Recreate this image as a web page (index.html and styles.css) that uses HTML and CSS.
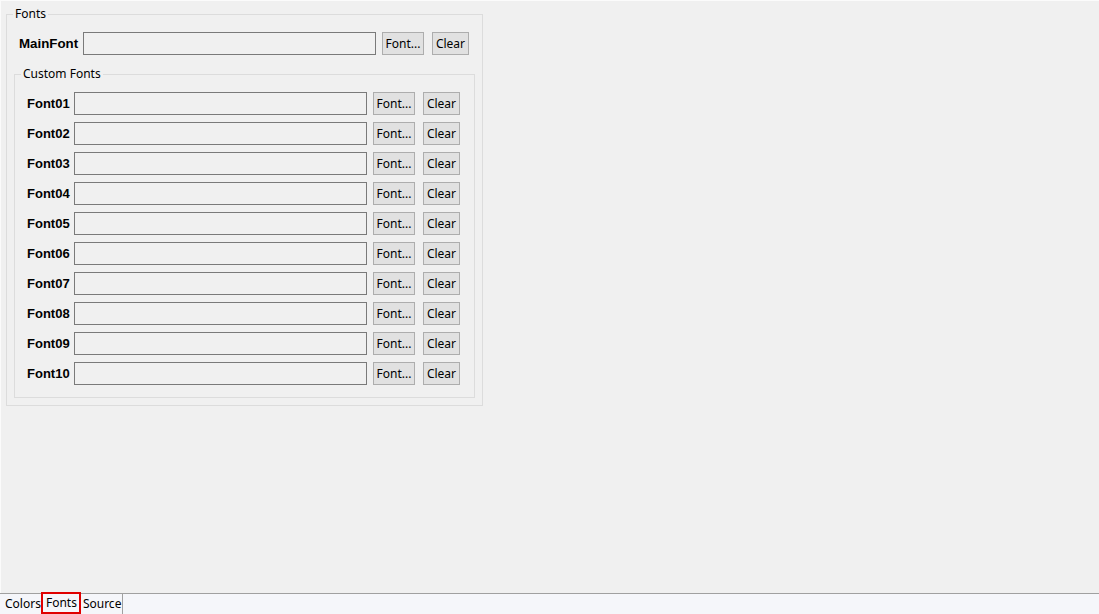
FILE: index.html
```html
<html lang="en">
  <head>
    <meta charset="UTF-8" />
    <meta name="viewport" content="width=device-width, initial-scale=1.0" />
    <title>Fonts</title>
    <link rel="stylesheet" href="styles.css">
  </head>
  <body>
    <div class="window">
      <div class="page">
        <fieldset class="group outer">
          <legend>Fonts</legend>
          <div class="group-body outer-body">
            <div class="font-row main-row">
              <label class="font-label">MainFont</label>
              <input class="font-field" type="text" readonly />
              <button class="btn btn-font">Font...</button>
              <button class="btn btn-clear">Clear</button>
            </div>

            <fieldset class="group inner">
              <legend>Custom Fonts</legend>
              <div class="group-body inner-body">
                <div class="font-row">
                  <label class="font-label">Font01</label>
                  <input class="font-field" type="text" readonly />
                  <button class="btn btn-font">Font...</button>
                  <button class="btn btn-clear">Clear</button>
                </div>
                <div class="font-row">
                  <label class="font-label">Font02</label>
                  <input class="font-field" type="text" readonly />
                  <button class="btn btn-font">Font...</button>
                  <button class="btn btn-clear">Clear</button>
                </div>
                <div class="font-row">
                  <label class="font-label">Font03</label>
                  <input class="font-field" type="text" readonly />
                  <button class="btn btn-font">Font...</button>
                  <button class="btn btn-clear">Clear</button>
                </div>
                <div class="font-row">
                  <label class="font-label">Font04</label>
                  <input class="font-field" type="text" readonly />
                  <button class="btn btn-font">Font...</button>
                  <button class="btn btn-clear">Clear</button>
                </div>
                <div class="font-row">
                  <label class="font-label">Font05</label>
                  <input class="font-field" type="text" readonly />
                  <button class="btn btn-font">Font...</button>
                  <button class="btn btn-clear">Clear</button>
                </div>
                <div class="font-row">
                  <label class="font-label">Font06</label>
                  <input class="font-field" type="text" readonly />
                  <button class="btn btn-font">Font...</button>
                  <button class="btn btn-clear">Clear</button>
                </div>
                <div class="font-row">
                  <label class="font-label">Font07</label>
                  <input class="font-field" type="text" readonly />
                  <button class="btn btn-font">Font...</button>
                  <button class="btn btn-clear">Clear</button>
                </div>
                <div class="font-row">
                  <label class="font-label">Font08</label>
                  <input class="font-field" type="text" readonly />
                  <button class="btn btn-font">Font...</button>
                  <button class="btn btn-clear">Clear</button>
                </div>
                <div class="font-row">
                  <label class="font-label">Font09</label>
                  <input class="font-field" type="text" readonly />
                  <button class="btn btn-font">Font...</button>
                  <button class="btn btn-clear">Clear</button>
                </div>
                <div class="font-row">
                  <label class="font-label">Font10</label>
                  <input class="font-field" type="text" readonly />
                  <button class="btn btn-font">Font...</button>
                  <button class="btn btn-clear">Clear</button>
                </div>
              </div>
            </fieldset>
          </div>
        </fieldset>
      </div>

      <div class="tabs">
        <div class="tab">Colors</div>
        <div class="tab selected">Fonts</div>
        <div class="tab last">Source</div>
      </div>
    </div>
  </body>
</html>
```

FILE: styles.css
```css
body {
  margin: 0;
  background-color: #f0f0f0;
  font-family: "Segoe UI", "Noto Sans", sans-serif;
  font-size: 12px;
  color: #000;
}
.window {
  display: flex;
  flex-direction: column;
  height: 614px;
}
.page {
  flex: 1;
  border-top: 1px solid #fbfbfb;
  border-left: 1px solid #fbfbfb;
  padding: 5px 0 0 5px;
}
.group {
  margin: 0;
  padding: 0;
  min-width: 0;
  border: 1px solid #dcdcdc;
  box-sizing: border-box;
}
.group legend {
  margin-left: 6px;
  padding: 0 2px;
  font-size: 12px;
  line-height: 16px;
}
.outer {
  width: 477px;
}
.inner {
  width: 461px;
  margin-top: 11px;
}
.group-body {
  display: flex;
  flex-direction: column;
}
.outer-body {
  padding: 10px 7px 7px 7px;
}
.inner-body {
  padding: 10px 12px 12px 12px;
  gap: 7px;
}
.font-row {
  display: flex;
  align-items: center;
  height: 23px;
}
.main-row {
  padding-left: 5px;
}
.font-label {
  width: 42px;
  margin-right: 5px;
  font-family: "Liberation Sans", Arial, sans-serif;
  font-weight: bold;
  font-size: 13px;
  white-space: nowrap;
}
.main-row .font-label {
  width: 59px;
  font-size: 13.3px;
}
.font-field {
  width: 293px;
  height: 23px;
  box-sizing: border-box;
  margin: 0;
  padding: 0 3px;
  border: 1px solid #7a7a7a;
  background-color: #f0f0f0;
  outline: none;
}
.btn {
  height: 23px;
  box-sizing: border-box;
  margin: 0;
  padding: 0;
  border: 1px solid #adadad;
  background-color: #e1e1e1;
  font-family: "Segoe UI", "Noto Sans", sans-serif;
  font-size: 12px;
  color: #000;
}
.btn-font {
  width: 42px;
  margin-left: 6px;
}
.btn-clear {
  width: 37px;
  margin-left: 8px;
}
.tabs {
  display: flex;
  height: 21px;
  box-sizing: border-box;
  border-top: 1px solid #a0a0a0;
  background-color: #f5f6fa;
  padding-left: 2px;
}
.tab {
  padding: 0 0 0 3px;
  line-height: 20px;
}
.tab.selected {
  margin-top: -2px;
  height: 22px;
  box-sizing: border-box;
  border: 2px solid #e00000;
  padding: 0 2px 0 3px;
  line-height: 18px;
}
.tab.last {
  padding: 0 1px 0 2px;
  border-right: 1px solid #a0a0a0;
}
```
